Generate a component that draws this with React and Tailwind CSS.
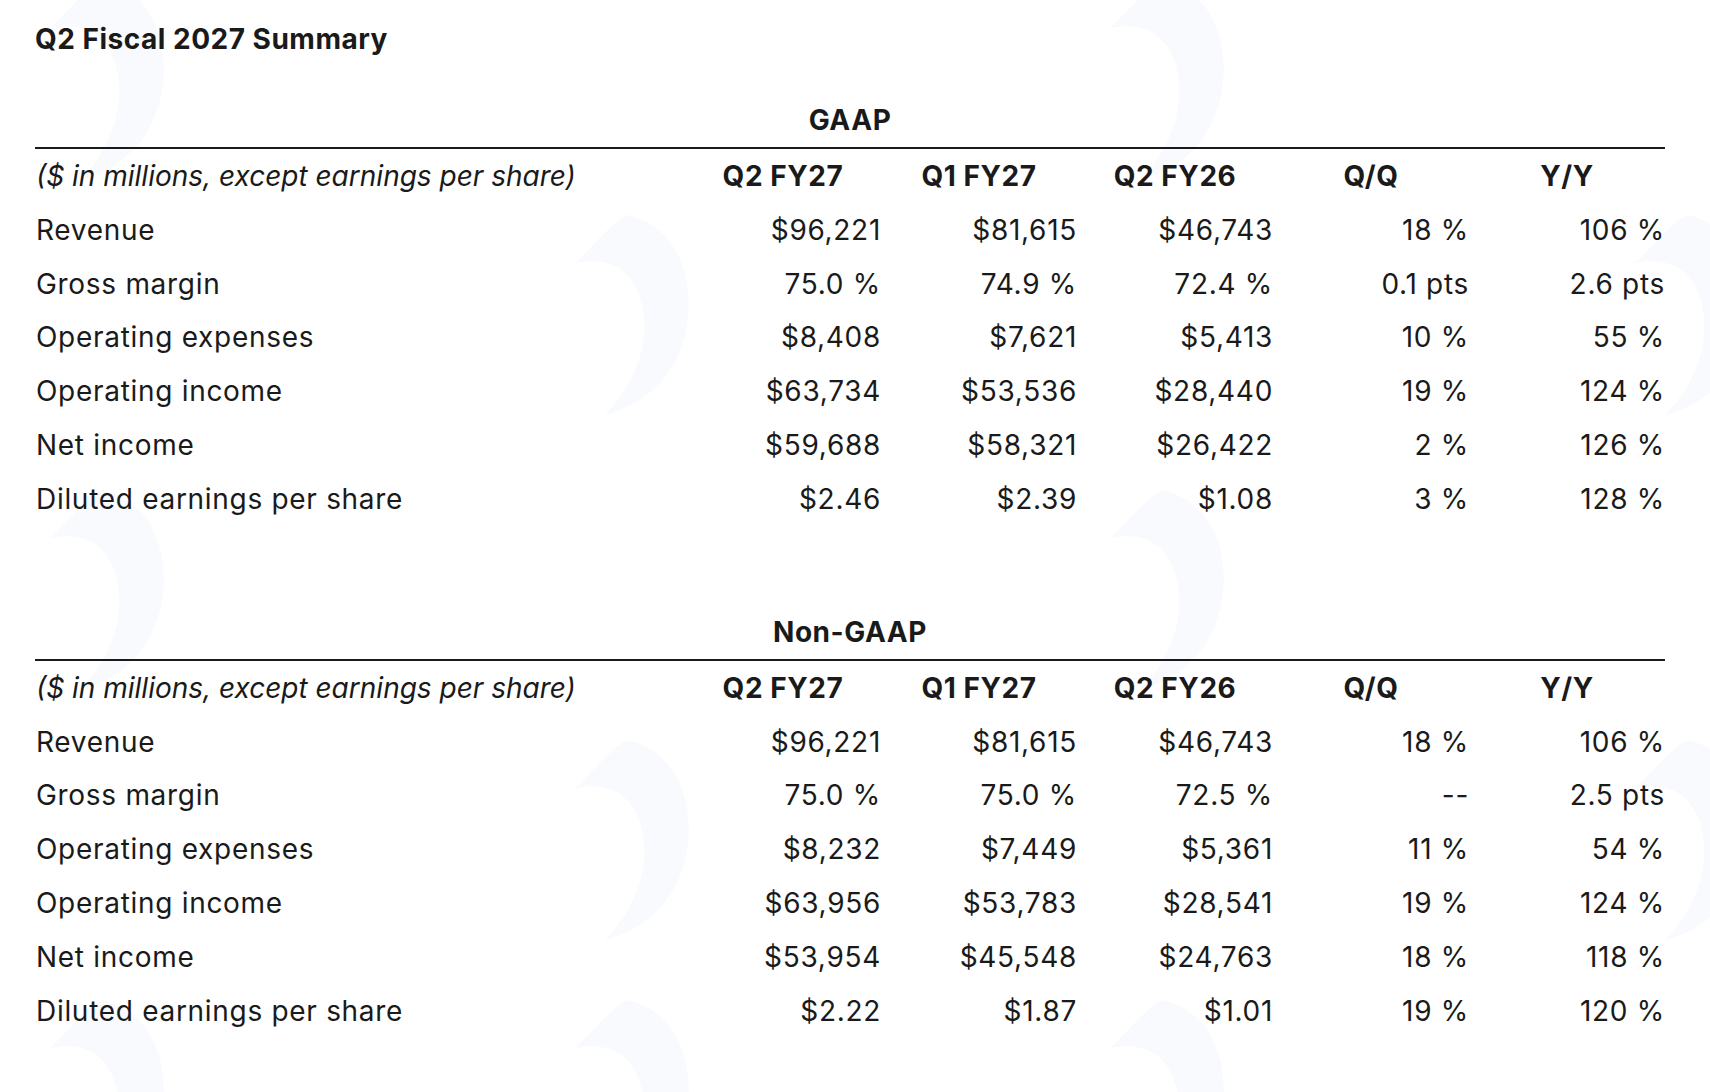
import React from 'react';

const COLUMNS = ['Q2 FY27', 'Q1 FY27', 'Q2 FY26', 'Q/Q', 'Y/Y'];

const GAAP_ROWS = [
  { label: 'Revenue', values: ['$96,221', '$81,615', '$46,743', '18 %', '106 %'] },
  { label: 'Gross margin', values: ['75.0 %', '74.9 %', '72.4 %', '0.1 pts', '2.6 pts'] },
  { label: 'Operating expenses', values: ['$8,408', '$7,621', '$5,413', '10 %', '55 %'] },
  { label: 'Operating income', values: ['$63,734', '$53,536', '$28,440', '19 %', '124 %'] },
  { label: 'Net income', values: ['$59,688', '$58,321', '$26,422', '2 %', '126 %'] },
  { label: 'Diluted earnings per share', values: ['$2.46', '$2.39', '$1.08', '3 %', '128 %'] },
];

const NON_GAAP_ROWS = [
  { label: 'Revenue', values: ['$96,221', '$81,615', '$46,743', '18 %', '106 %'] },
  { label: 'Gross margin', values: ['75.0 %', '75.0 %', '72.5 %', '--', '2.5 pts'] },
  { label: 'Operating expenses', values: ['$8,232', '$7,449', '$5,361', '11 %', '54 %'] },
  { label: 'Operating income', values: ['$63,956', '$53,783', '$28,541', '19 %', '124 %'] },
  { label: 'Net income', values: ['$53,954', '$45,548', '$24,763', '18 %', '118 %'] },
  { label: 'Diluted earnings per share', values: ['$2.22', '$1.87', '$1.01', '19 %', '120 %'] },
];

// faint swoosh watermarks behind the tables
const MARKS = [
  [40, -20], [565, 215], [1100, -20], [1625, 215],
  [40, 490], [565, 740], [1100, 490], [1625, 740],
  [40, 1000], [565, 1000], [1100, 1000],
];

const Watermark = () => (
  <svg className="absolute inset-0 pointer-events-none" width="1710" height="1092">
    {MARKS.map(([x, y], i) => (
      <path key={i} transform={`translate(${x} ${y})`}
        d="M62 0 C110 10 130 60 122 110 C114 160 80 190 40 200 C70 170 84 130 78 95 C72 60 50 40 10 48 C30 30 44 10 62 0 Z"
        fill="#f8fafd" />
    ))}
  </svg>
);

const Table = ({ title, rows }) => (
  <section>
    <h3 className="text-center text-[28px] leading-[40px] font-bold tracking-[0.02em] mb-[7px]">{title}</h3>
    <div className="border-t-2 border-[#1a1a1a] grid grid-cols-[650px_repeat(5,196px)]">
      <div className="h-[54px] flex items-center italic tracking-normal pl-px">($ in millions, except earnings per share)</div>
      {COLUMNS.map(c => (
        <div key={c} className="h-[54px] flex items-center justify-center font-bold tracking-[0.02em]">{c}</div>
      ))}
      {rows.map(row => (
        <React.Fragment key={row.label}>
          <div className="h-[53.8px] flex items-center pl-px">{row.label}</div>
          {row.values.map((v, i) => (
            <div key={i} className="h-[53.8px] flex items-center justify-end">{v}</div>
          ))}
        </React.Fragment>
      ))}
    </div>
  </section>
);

export default function App() {
  return (
    <div className="relative w-[1710px] h-[1092px] overflow-hidden bg-white text-[#1a1a1a] text-[28px] tracking-[0.025em] font-['Inter',sans-serif]">
      <Watermark />
      <div className="relative pl-[35px] pt-[19px] w-[1665px]">
        <h2 className="text-[28px] leading-[40px] font-bold tracking-[0.018em]">Q2 Fiscal 2027 Summary</h2>
        <div className="mt-[41px]">
          <Table title="GAAP" rows={GAAP_ROWS} />
        </div>
        <div className="mt-[86px]">
          <Table title="Non-GAAP" rows={NON_GAAP_ROWS} />
        </div>
      </div>
    </div>
  );
}
